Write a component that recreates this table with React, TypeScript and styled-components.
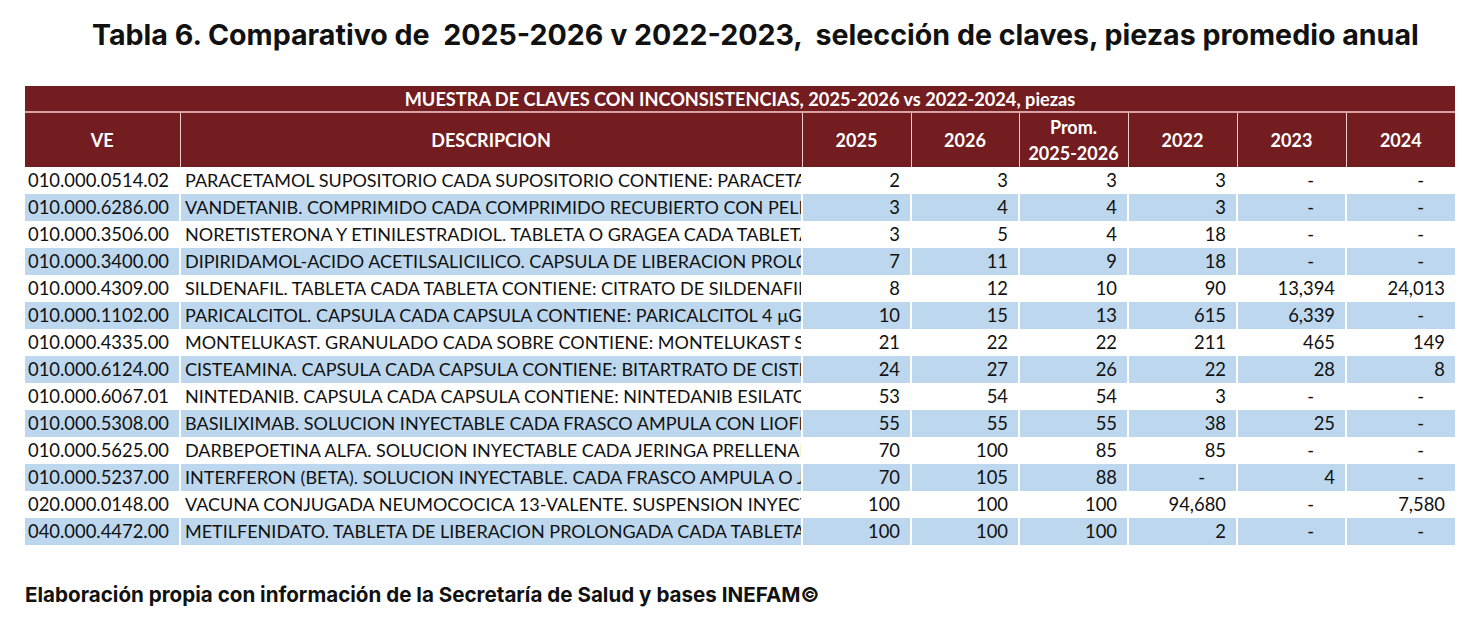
import React from "react";
import styled, { createGlobalStyle } from "styled-components";

const Global = createGlobalStyle`
  html, body { margin: 0; padding: 0; background: #ffffff; }
  body { width: 1470px; height: 620px; overflow: hidden; }
`;

const Page = styled.div`
  width: 1470px;
  height: 620px;
  padding: 0 25px;
  box-sizing: border-box;
  display: flex;
  flex-direction: column;
`;

const Title = styled.h1`
  margin: 0;
  padding: 17px 0 0 67px;
  height: 86px;
  box-sizing: border-box;
  font-family: Inter, "Open Sans", sans-serif;
  font-weight: 700;
  font-size: 28.6px;
  line-height: 36px;
  color: #111111;
  white-space: pre;
`;

const Table = styled.table`
  width: 1430px;
  border-collapse: collapse;
  table-layout: fixed;
  font-family: Lato, "Liberation Sans", sans-serif;
`;

const Col = styled.col<{ $w: number }>`
  width: ${(p) => p.$w}px;
`;

const SuperHead = styled.th`
  background: #741d20;
  color: #ffffff;
  font-weight: 700;
  font-size: 18.2px;
  line-height: 24px;
  height: 25px;
  padding: 0;
  text-align: center;
  border-bottom: 2px solid #d9a3a3;
`;

const HeadCell = styled.th`
  background: #741d20;
  color: #ffffff;
  font-weight: 700;
  font-size: 18px;
  line-height: 26px;
  height: 54px;
  padding: 0;
  text-align: center;
  border-left: 1px solid #ecd0d0;
  &:first-child { border-left: none; }
`;

const Row = styled.tr<{ $alt: boolean }>`
  background: ${(p) => (p.$alt ? "#bdd7ee" : "#ffffff")};
`;

const Cell = styled.td`
  height: 27px;
  padding: 0;
  font-size: 18.4px;
  line-height: 25px;
  color: #111111;
  border-left: 2px solid #ffffff;
  white-space: nowrap;
  overflow: hidden;
  &:first-child { border-left: none; }
`;

const CodeCell = styled(Cell)`
  padding-left: 3px;
`;

const DescCell = styled(Cell)`
  padding-left: 4px;
  font-size: 18px;
  text-overflow: clip;
`;

const NumCell = styled(Cell)<{ $dash: boolean }>`
  text-align: right;
  padding-right: ${(p) => (p.$dash ? "31px" : "10px")};
`;

const Footer = styled.p`
  margin: 37px 0 0 0;
  font-family: Inter, "Open Sans", sans-serif;
  font-weight: 700;
  font-size: 20.6px;
  color: #111111;
`;

const widths = [155, 622, 109, 108, 109, 109, 109, 109];
const columns = ["2025", "2026", "PROM", "2022", "2023", "2024"];

const rows: [string, string, string[]][] = [
  ["010.000.0514.02", "PARACETAMOL SUPOSITORIO CADA SUPOSITORIO CONTIENE: PARACETAMOL 300 MG ENVASE CON 3 SUPOSITORIOS", ["2", "3", "3", "3", "-", "-"]],
  ["010.000.6286.00", "VANDETANIB. COMPRIMIDO CADA COMPRIMIDO RECUBIERTO CON PELICULA CONTIENE", ["3", "4", "4", "3", "-", "-"]],
  ["010.000.3506.00", "NORETISTERONA Y ETINILESTRADIOL. TABLETA O GRAGEA CADA TABLETA O GRAGEA", ["3", "5", "4", "18", "-", "-"]],
  ["010.000.3400.00", "DIPIRIDAMOL-ACIDO ACETILSALICILICO. CAPSULA DE LIBERACION PROLONGADA", ["7", "11", "9", "18", "-", "-"]],
  ["010.000.4309.00", "SILDENAFIL. TABLETA CADA TABLETA CONTIENE: CITRATO DE SILDENAFIL EQUIVALENTE", ["8", "12", "10", "90", "13,394", "24,013"]],
  ["010.000.1102.00", "PARICALCITOL. CAPSULA CADA CAPSULA CONTIENE: PARICALCITOL 4 µG. ENVASE", ["10", "15", "13", "615", "6,339", "-"]],
  ["010.000.4335.00", "MONTELUKAST. GRANULADO CADA SOBRE CONTIENE: MONTELUKAST SODICO", ["21", "22", "22", "211", "465", "149"]],
  ["010.000.6124.00", "CISTEAMINA. CAPSULA CADA CAPSULA CONTIENE: BITARTRATO DE CISTEAMINA", ["24", "27", "26", "22", "28", "8"]],
  ["010.000.6067.01", "NINTEDANIB. CAPSULA CADA CAPSULA CONTIENE: NINTEDANIB ESILATO", ["53", "54", "54", "3", "-", "-"]],
  ["010.000.5308.00", "BASILIXIMAB. SOLUCION INYECTABLE CADA FRASCO AMPULA CON LIOFILIZADO", ["55", "55", "55", "38", "25", "-"]],
  ["010.000.5625.00", "DARBEPOETINA ALFA. SOLUCION INYECTABLE CADA JERINGA PRELLENADA", ["70", "100", "85", "85", "-", "-"]],
  ["010.000.5237.00", "INTERFERON (BETA). SOLUCION INYECTABLE. CADA FRASCO AMPULA O JERINGA", ["70", "105", "88", "-", "4", "-"]],
  ["020.000.0148.00", "VACUNA CONJUGADA NEUMOCOCICA 13-VALENTE. SUSPENSION INYECTABLE", ["100", "100", "100", "94,680", "-", "7,580"]],
  ["040.000.4472.00", "METILFENIDATO. TABLETA DE LIBERACION PROLONGADA CADA TABLETA CONTIENE", ["100", "100", "100", "2", "-", "-"]],
];

export default function App() {
  return (
    <>
      <Global />
      <Page>
        <Title>{"Tabla 6. Comparativo de  2025-2026 v 2022-2023,  selección de claves, piezas promedio anual"}</Title>
        <Table>
          <colgroup>
            {widths.map((w, i) => (
              <Col key={i} $w={w} />
            ))}
          </colgroup>
          <thead>
            <tr>
              <SuperHead colSpan={8}>MUESTRA DE CLAVES CON INCONSISTENCIAS, 2025-2026 vs 2022-2024, piezas</SuperHead>
            </tr>
            <tr>
              <HeadCell>VE</HeadCell>
              <HeadCell>DESCRIPCION</HeadCell>
              {columns.map((c) =>
                c === "PROM" ? (
                  <HeadCell key={c}>
                    Prom.
                    <br />
                    2025-2026
                  </HeadCell>
                ) : (
                  <HeadCell key={c}>{c}</HeadCell>
                )
              )}
            </tr>
          </thead>
          <tbody>
            {rows.map(([code, desc, vals], i) => (
              <Row key={code} $alt={i % 2 === 1}>
                <CodeCell>{code}</CodeCell>
                <DescCell>{desc}</DescCell>
                {vals.map((v, j) => (
                  <NumCell key={j} $dash={v === "-"}>
                    {v}
                  </NumCell>
                ))}
              </Row>
            ))}
          </tbody>
        </Table>
        <Footer>Elaboración propia con información de la Secretaría de Salud y bases INEFAM©</Footer>
      </Page>
    </>
  );
}
